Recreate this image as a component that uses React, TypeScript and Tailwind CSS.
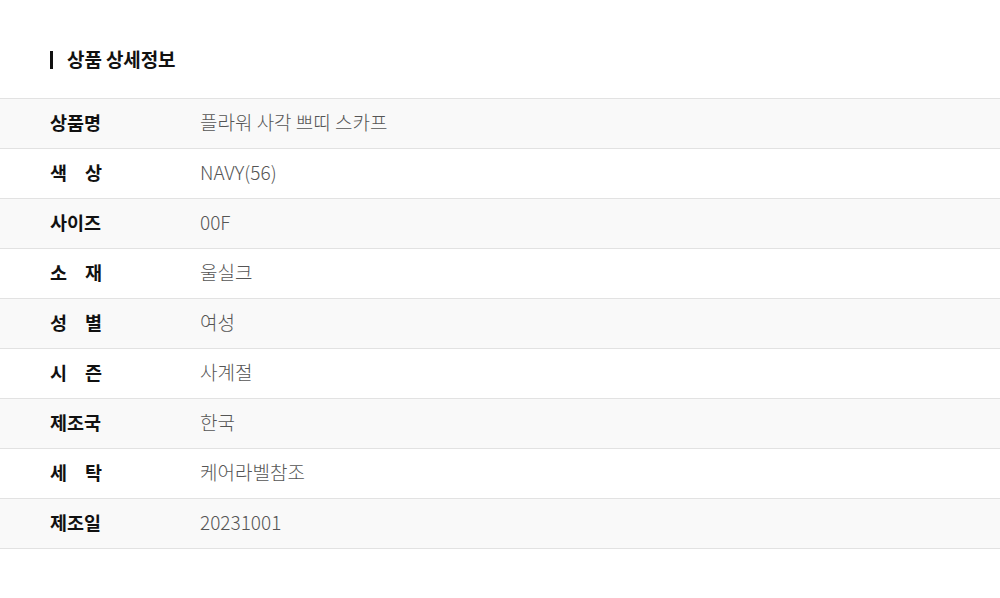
import React from "react";

const rows: [string[], string][] = [
  [["상품명"], "플라워 사각 쁘띠 스카프"],
  [["색", "상"], "NAVY(56)"],
  [["사이즈"], "00F"],
  [["소", "재"], "울실크"],
  [["성", "별"], "여성"],
  [["시", "즌"], "사계절"],
  [["제조국"], "한국"],
  [["세", "탁"], "케어라벨참조"],
  [["제조일"], "20231001"],
];

export default function App() {
  return (
    <div
      className="w-[1000px] h-[598px] bg-white"
      style={{ fontFamily: '"Noto Sans CJK KR", "Noto Sans", sans-serif' }}
    >
      <div className="pt-[47px] pl-[50px] h-[98px]">
        <div className="flex items-center h-[24px]">
          <div className="w-[3px] h-[18px] bg-[#111] mt-[2px]" />
          <h2 className="ml-[14px] text-[19px] font-bold text-[#111] leading-[24px] tracking-[-0.1px]">상품 상세정보</h2>
        </div>
      </div>
      <div className="border-t border-[#e2e2e2]">
        {rows.map(([label, value], i) => (
          <div
            key={i}
            className={`flex items-center h-[50px] pb-[4px] border-b border-[#e2e2e2] ${i % 2 === 0 ? "bg-[#f9f9f9]" : "bg-white"}`}
          >
            <div className="pl-[50px] w-[200px]">
              <div className="flex justify-between w-[52px] text-[18.5px] font-bold text-[#111] leading-[24px]">
                {label.map((c, j) => (
                  <span key={j}>{c}</span>
                ))}
              </div>
            </div>
            <div className="text-[19px] font-light text-[#555] leading-[24px]">{value}</div>
          </div>
        ))}
      </div>
    </div>
  );
}
